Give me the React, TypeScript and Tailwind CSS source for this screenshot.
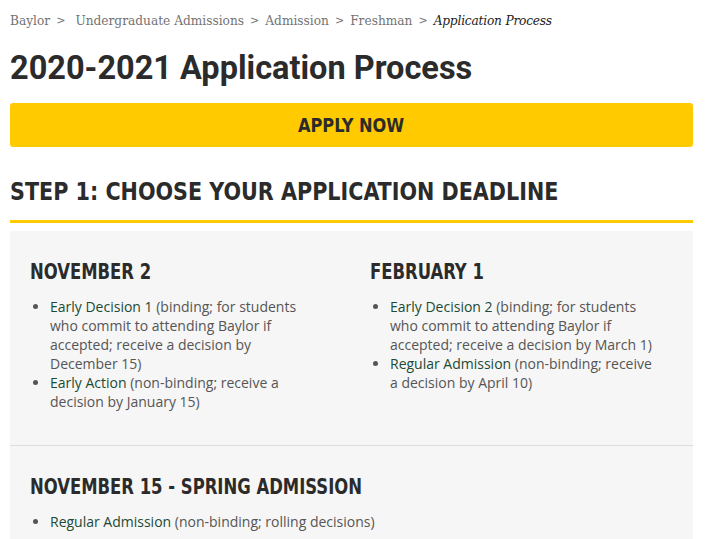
import React from 'react';

type Item = { link: string; rest: string };

const crumbs = ['Baylor', 'Undergraduate Admissions', 'Admission', 'Freshman'];

const narrow = { fontFamily: '"DejaVu Sans Condensed", sans-serif' };

const Deadline: React.FC<{ title: string; items: Item[] }> = ({ title, items }) => (
  <div className="flex flex-col">
    <h3 className="origin-left scale-x-[0.87] text-[21px] leading-[24px] font-bold whitespace-nowrap text-[#2b2b2b]" style={narrow}>
      {title}
    </h3>
    <ul className="mt-[13px] list-disc pl-[20px] text-[14px] leading-[19px] text-[#555] marker:text-[#555]">
      {items.map((it) => (
        <li key={it.link}>
          <a className="text-[#1c4a35]" href="#">{it.link}</a> {it.rest}
        </li>
      ))}
    </ul>
  </div>
);

export default function App() {
  return (
    <div className="w-[707px] h-[539px] overflow-hidden bg-white pl-[10px] pr-[14px] pt-[12px]" style={{ fontFamily: '"Open Sans", sans-serif' }}>
      <nav className="flex items-center text-[12.2px] leading-[18px] text-[#737373]" style={{ fontFamily: '"DejaVu Serif", serif' }}>
        {crumbs.map((c, i) => (
          <React.Fragment key={c}>
            <span>{c}</span>
            <span className={`${i === 0 ? 'ml-[6px] mr-[10px]' : 'mx-[6px]'} text-[11px]`}>&gt;</span>
          </React.Fragment>
        ))}
        <span className="italic text-[#222] tracking-[-0.2px]">Application Process</span>
      </nav>

      <h1 className="mt-[18px] text-[32.5px] leading-[40px] font-bold text-[#2b2b2b]" style={{ fontFamily: 'Roboto, sans-serif' }}>
        2020-2021 Application Process
      </h1>

      <a href="#" className="mt-[15px] flex h-[44px] items-center justify-center rounded-[3px] bg-[#ffca00] text-[#2b2b2b]" style={narrow}>
        <span className="scale-x-[0.9] text-[20px] font-bold">APPLY NOW</span>
      </a>

      <h2 className="mt-[29px] origin-left scale-x-[0.92] whitespace-nowrap text-[25px] leading-[32px] font-bold text-[#2b2b2b]" style={narrow}>
        STEP 1: CHOOSE YOUR APPLICATION DEADLINE
      </h2>
      <div className="mt-[12px] h-[3px] bg-[#ffca00]" />

      <div className="mt-[8px] bg-[#f6f6f6]">
        <div className="grid grid-cols-[290px_290px] gap-[50px] px-[20px] pt-[29px] pb-[34px] border-b border-[#ddd]">
          <Deadline
            title="NOVEMBER 2"
            items={[
              { link: 'Early Decision 1', rest: '(binding; for students who commit to attending Baylor if accepted; receive a decision by December 15)' },
              { link: 'Early Action', rest: '(non-binding; receive a decision by January 15)' },
            ]}
          />
          <Deadline
            title="FEBRUARY 1"
            items={[
              { link: 'Early Decision 2', rest: '(binding; for students who commit to attending Baylor if accepted; receive a decision by March 1)' },
              { link: 'Regular Admission', rest: '(non-binding; receive a decision by April 10)' },
            ]}
          />
        </div>
        <div className="px-[20px] pt-[29px] pb-[20px]">
          <Deadline
            title="NOVEMBER 15 - SPRING ADMISSION"
            items={[{ link: 'Regular Admission', rest: '(non-binding; rolling decisions)' }]}
          />
        </div>
      </div>
    </div>
  );
}
